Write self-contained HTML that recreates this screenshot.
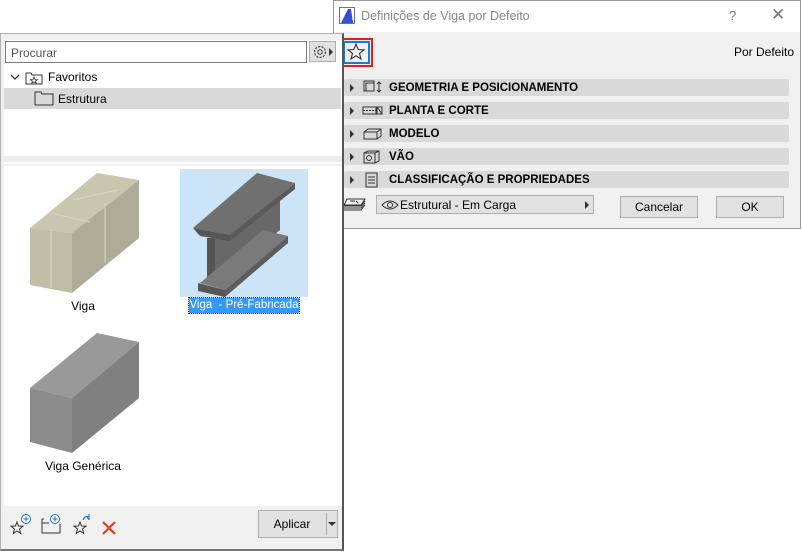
<!DOCTYPE html>
<html><head><meta charset="utf-8"><style>
*{box-sizing:border-box;margin:0;padding:0}
body{width:802px;height:553px;background:#fff;position:relative;overflow:hidden;font-family:"Liberation Sans",sans-serif;font-size:12px;color:#000}
.a{position:absolute}
.row{position:absolute;left:344px;width:445px;height:17px;background:#d9d9d9;border-radius:2px;font-weight:bold;font-size:11.5px;line-height:17px}
.row .t{position:absolute;left:45px;top:1px}
.row .tri{position:absolute;left:6px;top:5px;width:0;height:0;border-left:4px solid #333;border-top:4px solid transparent;border-bottom:4px solid transparent}
.btn{position:absolute;background:#e1e1e1;border:1px solid #adadad;text-align:center;font-size:12px}
</style></head><body>
<!-- dialog -->
<div class="a" style="left:333px;top:0;width:468px;height:229px;background:#f0f0f0;border:1px solid #999"></div>
<div class="a" style="left:334px;top:1px;width:466px;height:31px;background:#fff"></div>
<svg class="a" style="left:339px;top:7px" width="16" height="17"><rect x="0.5" y="0.5" width="15" height="16" fill="#fff" stroke="#6070c0"/><path d="M2 16 L9 2 L12 2 L14 16 Z" fill="#3050d0"/></svg>
<div class="a" style="left:361px;top:9px;color:#888;font-size:12.5px">Definições de Viga por Defeito</div>
<div class="a" style="left:729px;top:8px;color:#777;font-size:13px">?</div>
<div class="a" style="left:771px;top:5px;color:#777;font-size:17px">✕</div>
<div class="a" style="left:340px;top:38px;width:33px;height:29px;border:2px solid #e02020"></div>
<div class="a" style="left:343px;top:41px;width:27px;height:23px;border:2px solid #1a7ad8;background:#f0f0f0"></div>
<svg class="a" style="left:346px;top:42px" width="20" height="20"><path d="M10 2 L12.2 7.5 L18 7.8 L13.5 11.4 L15 17 L10 13.8 L5 17 L6.5 11.4 L2 7.8 L7.8 7.5 Z" fill="none" stroke="#333" stroke-width="1.1"/></svg>
<div class="a" style="left:734px;top:45px;font-size:12px">Por Defeito</div>
<div class="row" style="top:79px"><span class="tri"></span><svg class="a" style="left:18px;top:1px" width="22" height="15"><rect x="2" y="1" width="10" height="10" fill="none" stroke="#333"/><rect x="4" y="3" width="8" height="8" fill="none" stroke="#333"/><path d="M17 2 V12 M15 4 L17 2 L19 4 M15 10 L17 12 L19 10" stroke="#333" fill="none"/></svg><span class="t">GEOMETRIA E POSICIONAMENTO</span></div>
<div class="row" style="top:102px"><span class="tri"></span><svg class="a" style="left:18px;top:3px" width="22" height="12"><rect x="1" y="2" width="13" height="7" fill="none" stroke="#333"/><path d="M1 5.5 H14" stroke="#333" stroke-dasharray="2 1"/><rect x="15" y="2" width="5" height="7" fill="none" stroke="#333"/><path d="M15 2 L20 9" stroke="#333"/></svg><span class="t">PLANTA E CORTE</span></div>
<div class="row" style="top:125px"><span class="tri"></span><svg class="a" style="left:18px;top:2px" width="22" height="14"><path d="M2 5 L6 2 H19 V9 L15 12 H2 Z M2 5 H15 V12 M15 5 L19 2" fill="none" stroke="#333"/></svg><span class="t">MODELO</span></div>
<div class="row" style="top:148px"><span class="tri"></span><svg class="a" style="left:18px;top:1px" width="22" height="15"><path d="M2 4 L6 2 H17 V12 L13 14 H2 Z M2 4 H13 V14 M13 4 L17 2" fill="none" stroke="#333"/><circle cx="7" cy="9" r="2.5" fill="none" stroke="#333"/></svg><span class="t">VÃO</span></div>
<div class="row" style="top:171px"><span class="tri"></span><svg class="a" style="left:20px;top:1px" width="16" height="16"><rect x="2" y="1" width="11" height="14" fill="none" stroke="#333"/><path d="M4 5 H11 M4 8 H11 M4 11 H11" stroke="#333"/></svg><span class="t">CLASSIFICAÇÃO E PROPRIEDADES</span></div>
<svg class="a" style="left:343px;top:197px" width="26" height="16"><path d="M4 2 H22 L18 8 H1 Z M1 9 H18 L22 4 M1 11 H18 L22 6 M1 13 H18 L22 8" fill="none" stroke="#333"/><path d="M7 4 H12 M13 4 L15 6" stroke="#333"/></svg>
<div class="a" style="left:376px;top:195px;width:218px;height:19px;background:#e1e1e1;border:1px solid #adadad"></div>
<svg class="a" style="left:381px;top:199px" width="18" height="12"><path d="M1 6 Q9 -2 17 6 Q9 14 1 6 Z" fill="none" stroke="#333"/><circle cx="9" cy="6" r="2.5" fill="none" stroke="#333"/></svg>
<div class="a" style="left:400px;top:198px;font-size:12px">Estrutural - Em Carga</div>
<div class="a" style="left:585px;top:201px;border-left:4px solid #333;border-top:4px solid transparent;border-bottom:4px solid transparent"></div>
<div class="btn" style="left:620px;top:196px;width:78px;height:22px;line-height:20px">Cancelar</div>
<div class="btn" style="left:716px;top:196px;width:68px;height:22px;line-height:20px">OK</div>

<!-- left panel -->
<div class="a" style="left:0;top:33px;width:344px;height:518px;background:#f0f0f0;border:1px solid #b0b0b0;border-right:2px solid #555;border-bottom:2px solid #777"></div>
<div class="a" style="left:4px;top:40px;width:338px;height:124px;background:#fff"></div>
<div class="a" style="left:5px;top:41px;width:302px;height:22px;border:1px solid #7a7a7a;background:#fff;color:#555;padding:4px 0 0 5px;font-size:12px">Procurar</div>
<div class="a" style="left:309px;top:41px;width:27px;height:21px;background:#e1e1e1;border:1px solid #adadad"></div>
<svg class="a" style="left:311px;top:43px" width="24" height="18"><circle cx="9" cy="9" r="5.5" fill="none" stroke="#444" stroke-width="1.2" stroke-dasharray="2.2 1.2"/><circle cx="9" cy="9" r="2.3" fill="none" stroke="#444"/><path d="M18 5 L22 9 L18 13 Z" fill="#333"/></svg>
<svg class="a" style="left:10px;top:71px" width="34" height="14"><path d="M1 4 L5 8 L9 4" fill="none" stroke="#333" stroke-width="1.3"/><path d="M16 2 H21 L22 4 H32 V13 H16 Z" fill="none" stroke="#333"/><path d="M24 6 L25 8.5 L27.5 8.6 L25.6 10 L26.3 12.2 L24 11 L21.7 12.2 L22.4 10 L20.5 8.6 L23 8.5 Z" fill="none" stroke="#333" stroke-width=".8"/></svg>
<div class="a" style="left:48px;top:70px;font-size:12px">Favoritos</div>
<div class="a" style="left:4px;top:88px;width:337px;height:21px;background:#d9d9d9"></div>
<svg class="a" style="left:34px;top:90px" width="20" height="16"><path d="M1 2 H7 L8 4 H19 V15 H1 Z" fill="none" stroke="#333"/></svg>
<div class="a" style="left:58px;top:92px;font-size:12px">Estrutura</div>
<div class="a" style="left:4px;top:156px;width:338px;height:6px;background:#ececec"></div>
<div class="a" style="left:4px;top:166px;width:338px;height:340px;background:#fff"></div>
<!-- thumbs -->
<svg class="a" style="left:0;top:0" width="340" height="470">
<polygon points="30,228 97,173 139,180 72,233" fill="#c8c6ae"/>
<polygon points="30,228 72,233 72,293 30,285" fill="#bfbda5"/>
<polygon points="72,233 139,180 139,238 72,293" fill="#aeac96"/>
<path d="M51,230 V288 M105,203 V263 M50,213 L90,222 M72,200 L118,190" stroke="#d8d6c2" stroke-width="1" fill="none"/>
<rect x="180" y="169" width="128" height="128" fill="#cce4f7"/>
<polygon points="215,238 280,188 280,230 215,283" fill="#686868"/>
<polygon points="207,238 215,238 215,283 207,285" fill="#555"/>
<polygon points="200,283 263,230 288,236 225,290" fill="#7a7a7a"/>
<polygon points="198,283 225,290 225,297 198,291" fill="#555"/>
<polygon points="225,290 288,236 288,243 225,297" fill="#5c5c5c"/>
<polygon points="193,228 257,173 295,183 230,235" fill="#707070"/>
<polygon points="193,228 230,235 230,241 200,236" fill="#555"/>
<polygon points="230,235 295,183 295,189 230,241" fill="#5a5a5a"/>
<polygon points="30,388 97,333 139,342 72,398" fill="#999"/>
<polygon points="30,388 72,398 72,453 30,442" fill="#8c8c8c"/>
<polygon points="72,398 139,342 139,398 72,453" fill="#808080"/>
</svg>
<div class="a" style="left:0;top:299px;width:166px;text-align:center;font-size:12px">Viga</div>
<div class="a" style="left:189px;top:298px;width:110px;height:15px;background:#3399ff;outline:1px dotted #222;color:#fff;font-size:11.5px;line-height:15px;text-align:center;white-space:nowrap">Viga &nbsp;- Pré-Fabricada</div>
<div class="a" style="left:0;top:459px;width:166px;text-align:center;font-size:12px">Viga Genérica</div>
<!-- bottom toolbar -->
<svg class="a" style="left:10px;top:513px" width="110" height="24">
<g fill="none" stroke="#333"><path d="M7 9 L8.5 13 L13 13.2 L9.5 16 L10.7 20.5 L7 18 L3.3 20.5 L4.5 16 L1 13.2 L5.5 13 Z"/></g>
<circle cx="16" cy="6" r="4.5" fill="#fff" stroke="#1a6ed8"/><path d="M16 3.5 V8.5 M13.5 6 H18.5" stroke="#1a6ed8"/>
<path d="M32 6 V20 H50 V11 M32 6 H34 M32 10 H39" fill="none" stroke="#333"/>
<circle cx="45" cy="6" r="4.5" fill="#fff" stroke="#1a6ed8"/><path d="M45 3.5 V8.5 M42.5 6 H47.5" stroke="#1a6ed8"/>
<path d="M70 9 L71.5 13 L76 13.2 L72.5 16 L73.7 20.5 L70 18 L66.3 20.5 L67.5 16 L64 13.2 L68.5 13 Z" fill="none" stroke="#333"/>
<path d="M73 7 Q75 2 79 4 M79 1 V7 M77 4 L79 7" fill="none" stroke="#1a6ed8"/>
<path d="M93 9 L105 21 M105 9 L93 21" stroke="#e83a20" stroke-width="2.2"/>
</svg>
<div class="a" style="left:258px;top:510px;width:80px;height:28px;background:#e1e1e1;border:1px solid #adadad"></div>
<div class="a" style="left:258px;top:517px;width:68px;text-align:center;font-size:12px">Aplicar</div>
<div class="a" style="left:326px;top:513px;width:1px;height:22px;background:#aaa"></div>
<div class="a" style="left:328px;top:522px;border-top:4px solid #333;border-left:4px solid transparent;border-right:4px solid transparent"></div>
</body></html>
